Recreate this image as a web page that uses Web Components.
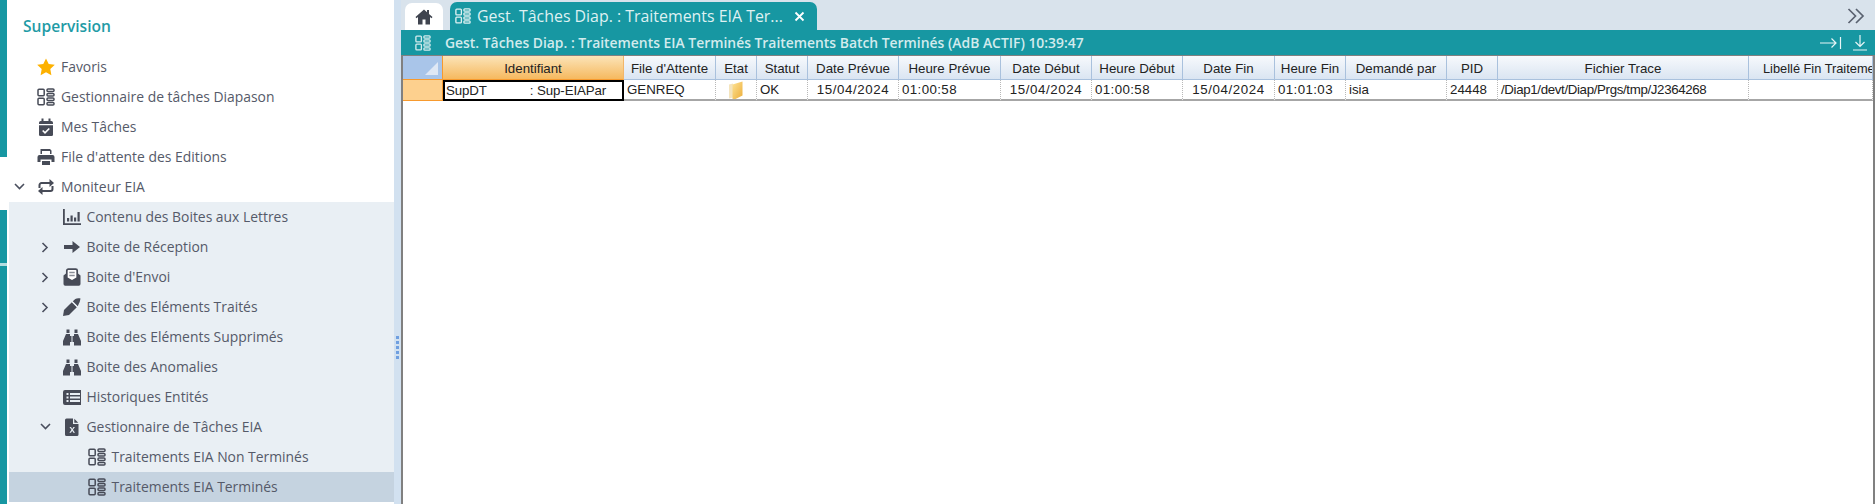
<!DOCTYPE html>
<html lang="fr">
<head>
<meta charset="utf-8">
<title>Supervision</title>
<style>
  html, body { margin: 0; height: 100%; overflow: hidden; background: #fff; }
  body { display: flex; width: 1875px; height: 504px; font-family: "Open Sans", sans-serif; }
</style>
</head>
<body>
<app-strip></app-strip>
<side-nav>
  <tree-row icon="star" level="0">Favoris</tree-row>
  <tree-row icon="board" level="0">Gestionnaire de tâches Diapason</tree-row>
  <tree-row icon="calendar" level="0">Mes Tâches</tree-row>
  <tree-row icon="print" level="0">File d'attente des Editions</tree-row>
  <tree-row icon="retweet" level="0" caret="down">Moniteur EIA</tree-row>
  <tree-group>
    <tree-row icon="chart" level="1">Contenu des Boites aux Lettres</tree-row>
    <tree-row icon="arrow" level="1" caret="right">Boite de Réception</tree-row>
    <tree-row icon="mail" level="1" caret="right">Boite d'Envoi</tree-row>
    <tree-row icon="pen" level="1" caret="right">Boite des Eléments Traités</tree-row>
    <tree-row icon="binoculars" level="1">Boite des Eléments Supprimés</tree-row>
    <tree-row icon="binoculars" level="1">Boite des Anomalies</tree-row>
    <tree-row icon="list" level="1">Historiques Entités</tree-row>
    <tree-row icon="excel" level="1" caret="down">Gestionnaire de Tâches EIA</tree-row>
    <tree-row icon="board" level="2">Traitements EIA Non Terminés</tree-row>
    <tree-row icon="board" level="2" selected>Traitements EIA Terminés</tree-row>
  </tree-group>
</side-nav>
<split-handle></split-handle>
<work-area>
  <tab-bar slot="tabs" label="Gest. Tâches Diap. : Traitements EIA Ter..."></tab-bar>
  <title-bar slot="title">Gest. Tâches Diap. : Traitements EIA Terminés Traitements Batch Terminés (AdB ACTIF) 10:39:47</title-bar>
  <data-grid slot="grid"></data-grid>
</work-area>

<script>
const ICONS = {
  star: '<path fill="#fdb100" d="M9 .4l2.700 5.600 6.100.8-4.500 4.300 1.100 6.100L9 14.300l-5.400 2.900 1.100-6.100L.2 6.800l6.100-.8z"/>',
  board: '<g fill="none" stroke="currentColor" stroke-width="1.500"><rect x="1" y="1.200" width="6.200" height="6.600" rx="1"/><rect x="1" y="10.200" width="6.200" height="6.600" rx="1"/><rect x="10" y="1" width="7" height="2.600" rx="1"/><rect x="10" y="5.400" width="7" height="2.600" rx="1"/><rect x="10" y="10" width="7" height="2.600" rx="1"/><rect x="10" y="14.400" width="7" height="2.600" rx="1"/></g>',
  calendar: '<path fill="currentColor" d="M4.500.5h2V3h5V.5h2V3h.8A1.700 1.700 0 0 1 16 4.700V6H2V4.700A1.700 1.700 0 0 1 3.700 3h.8zM2 7.300h14v9A1.500 1.500 0 0 1 14.500 18h-11A1.500 1.500 0 0 1 2 16.300z"/><path fill="none" stroke="#fff" stroke-width="1.700" d="M5.700 12.500l2.300 2.300 4.300-4.300"/>',
  print: '<path fill="currentColor" d="M3.500 1H13l1.500 1.500V6H13V3H5v3H3.500zM2.500 7h13A2 2 0 0 1 17.500 9v5h-3v-2.500h-11V14h-3V9a2 2 0 0 1 2-2zM5 13h8v4H5z"/>',
  retweet: '<g fill="none" stroke="currentColor" stroke-width="2"><path d="M2.500 10V7a2 2 0 0 1 2-2H14"/><path d="M15.500 8v3a2 2 0 0 1-2 2H4"/></g><path fill="currentColor" d="M12.500 1l4.500 4-4.500 4zM5.500 9L1 13l4.500 4z"/>',
  chart: '<path fill="currentColor" d="M0 1h1.800v14.200H18V17H0z"/><path fill="currentColor" d="M4 10h2.200v3.500H4zM7.500 7.500h2.200v6H7.500zM11 9.500h2.200v4H11zM14.500 4h2.200v9.500h-2.200z"/>',
  arrow: '<path fill="currentColor" d="M1 7h8.500V3l7.500 6-7.500 6v-4H1z"/>',
  mail: '<path fill="currentColor" d="M.5 7.500L3 5.500V9l6 4 6-4V5.500l2.500 2v8.500A1.700 1.700 0 0 1 15.800 17.700H2.200A1.700 1.700 0 0 1 .5 16z"/><path fill="#fff" stroke="currentColor" stroke-width="1.700" d="M3.800 10V2.600A1.500 1.500 0 0 1 5.300 1.100h7.400a1.500 1.500 0 0 1 1.500 1.500V10L9 13z"/><path stroke="#8a8e98" stroke-width="1.400" d="M6.300 4.500h5.400M6.300 7.500h5.400"/>',
  pen: '<path fill="currentColor" d="M0 18l1-6 7.800-7.800 5 5L6 17z"/><path fill="currentColor" d="M9.800 3.200L12.300.9c1.400-.9 3.800-.8 5.200-.5-.4 1.700-.6 3.800-1.700 5.300l-1 2.500z"/><path stroke="#e9eff4" stroke-width="1" fill="none" d="M9 3.500l5.500 5.500"/>',
  binoculars: '<path fill="currentColor" d="M3.500 1.500h3V5h-3zM11.500 1.500h3V5h-3zM3 6h4v2h1.500v6H7v3.500H0V13zM15 6h-4v2H9.500v6H11v3.500h7V13z"/>',
  list: '<path fill="currentColor" fill-rule="evenodd" d="M2 2h16A2 2 0 0 1 20 4v11a2 2 0 0 1-2 2H2a2 2 0 0 1-2-2V4a2 2 0 0 1 2-2zM3.500 5v2h2V5zM3.500 8.500v2h2v-2zM3.500 12v2h2v-2zM7 5v2h10V5zM7 8.500v2h10v-2zM7 12v2h10v-2z"/>',
  excel: '<path fill="currentColor" fill-rule="evenodd" d="M3.500.5h6.500V6h5.500v10.500a1.500 1.500 0 0 1-1.500 1.500H3.500A1.500 1.500 0 0 1 2 16.500V2A1.500 1.500 0 0 1 3.500.5zM11.300.8l4 3.900h-4zM6.500 9l2 2.800-2.100 3H8l1.200-2 1.200 2H12l-2.100-3 2-2.800h-1.500L9.200 10.900 8 9z"/>',
  home: '<path fill="currentColor" d="M9 1.500L.5 9l1 1.200L3 9v7.500h4.500V11.500h3v5H15V9l1.500 1.200 1-1.200L14 5.900V2h-2v2.200z"/>',
  folder: '<defs><linearGradient id="fg" x1="0" x2="1" y1="0" y2="1"><stop offset="0" stop-color="#fde396"/><stop offset="1" stop-color="#edae3a"/></linearGradient></defs><path fill="#f4e4bd" d="M2 3.500l4-1v14l-4 1z"/><path fill="url(#fg)" d="M5.500 3.500l10-3v14l-7 3.500h-3z"/>'
};

function iconSvg(name, size) {
  return `<svg width="${size}" height="${size}" viewBox="0 0 18 18">${ICONS[name] || ''}</svg>`;
}

// teal marks on the far left
class AppStrip extends HTMLElement {
  constructor() {
    super();
    this.attachShadow({ mode: 'open' });
    this.shadowRoot.innerHTML = `
      <style>
        :host { display: flex; flex-direction: column; flex: 0 0 8px; width: 8px; height: 504px; }
        div { background: #1797a2; width: 7px; }
        .a { height: 157px; }
        .gap { height: 53px; background: transparent; }
        .b { height: 53px; }
        .line { height: 3px; background: #b5dde0; }
        .c { flex: 1; }
      </style>
      <div class="a"></div><div class="gap"></div><div class="b"></div><div class="line"></div><div class="c"></div>
    `;
  }
}

class SideNav extends HTMLElement {
  constructor() {
    super();
    this.attachShadow({ mode: 'open' });
    this.shadowRoot.innerHTML = `
      <style>
        :host { display: flex; flex-direction: column; flex: 0 0 386px; width: 386px; height: 504px; overflow: hidden; background: #fff; }
        h1 { margin: 0; height: 52px; padding: 15px 0 0 15px; box-sizing: border-box; font: 600 15.600px/22px "Open Sans", sans-serif; color: #1f9ba6; }
      </style>
      <h1>Supervision</h1>
      <slot></slot>
    `;
  }
}

class TreeGroup extends HTMLElement {
  constructor() {
    super();
    this.attachShadow({ mode: 'open' });
    this.shadowRoot.innerHTML = `
      <style>:host { display: block; margin-left: 1px; background: #e9eff4; }</style>
      <slot></slot>
    `;
  }
}

class TreeRow extends HTMLElement {
  constructor() {
    super();
    this.attachShadow({ mode: 'open' });
  }

  connectedCallback() {
    const level = Number(this.getAttribute('level') || 0);
    const caret = this.getAttribute('caret');
    const pad = level === 0 ? 6 : 5.5 + level * 25;
    let caretSvg = '';
    if (caret === 'down') caretSvg = '<path d="M1 2l4.500 4.500L10 2"/>';
    if (caret === 'right') caretSvg = '<path d="M2.500 1l4.500 4.500L2.500 10"/>';
    this.shadowRoot.innerHTML = `
      <style>
        :host { display: flex; align-items: center; height: 30px; padding-left: ${pad}px; color: #555a69; font: 13.900px/30px "Open Sans", sans-serif; white-space: nowrap; }
        :host([selected]) { background: #c5d3e0; }
        .caret { flex: 0 0 23px; height: 12px; display: flex; align-items: center; }
        .caret svg { fill: none; stroke: #4a4f5e; stroke-width: 1.600; }
        .icon { flex: 0 0 24px; display: flex; align-items: center; color: #474b57; }
        .icon svg { display: block; }
      </style>
      <span class="caret"><svg width="11" height="11" viewBox="0 0 11 11">${caretSvg}</svg></span>
      <span class="icon">${iconSvg(this.getAttribute('icon'), 18)}</span>
      <slot></slot>
    `;
  }
}

class SplitHandle extends HTMLElement {
  constructor() {
    super();
    this.attachShadow({ mode: 'open' });
    this.shadowRoot.innerHTML = `
      <style>
        :host { display: flex; flex-direction: column; align-items: center; justify-content: center; gap: 2px; flex: 0 0 7px; width: 7px; height: 504px; box-sizing: border-box; padding-top: 321px; padding-bottom: 130px; background: #d2e1f0; }
        i { display: block; width: 3px; height: 3px; background: #6f9fe0; }
      </style>
      <i></i><i></i><i></i><i></i><i></i>
    `;
  }
}

class WorkArea extends HTMLElement {
  constructor() {
    super();
    this.attachShadow({ mode: 'open' });
    this.shadowRoot.innerHTML = `
      <style>
        :host { display: flex; flex-direction: column; flex: 1; min-width: 0; height: 504px; background: #d9e3ec; }
        .body { flex: 1; min-height: 0; display: flex; flex-direction: column; border-top: 1px solid #808080; border-left: 2px solid #808080; border-right: 2px solid #808080; background: #fff; }
      </style>
      <slot name="tabs"></slot>
      <slot name="title"></slot>
      <div class="body"><slot name="grid"></slot></div>
    `;
  }
}

class TabBar extends HTMLElement {
  constructor() {
    super();
    this.attachShadow({ mode: 'open' });
  }

  connectedCallback() {
    this.shadowRoot.innerHTML = `
      <style>
        :host { display: flex; align-items: flex-end; height: 30px; padding-left: 4px; color: #3f444f; }
        .home { width: 38px; height: 27px; margin-right: 7px; display: flex; align-items: center; justify-content: center; background: #fff; border-radius: 7px 7px 0 0; }
        .tab { width: 367px; height: 28px; box-sizing: border-box; padding: 0 12px 0 5px; display: flex; align-items: center; gap: 6px; background: #1797a2; border-radius: 7px 7px 0 0; color: #dff1f2; font: 15.900px "Open Sans", sans-serif; white-space: nowrap; }
        .tab span { flex: 1; }
        .tab svg { display: block; }
        .more { margin: 0 10px 6px auto; color: #5a6270; }
        .more svg { display: block; fill: none; stroke: currentColor; stroke-width: 1.700; }
      </style>
      <div class="home">${iconSvg('home', 18)}</div>
      <div class="tab">
        ${iconSvg('board', 16)}
        <span>${this.getAttribute('label')}</span>
        <svg width="11" height="11" viewBox="0 0 11 11" fill="none" stroke="#fff" stroke-width="1.800"><path d="M1.500 1.500l8 8M9.500 1.500l-8 8"/></svg>
      </div>
      <div class="more"><svg width="18" height="16" viewBox="0 0 18 16"><path d="M1.500 1l7 7-7 7M9 1l7 7-7 7"/></svg></div>
    `;
  }
}

class TitleBar extends HTMLElement {
  constructor() {
    super();
    this.attachShadow({ mode: 'open' });
    this.shadowRoot.innerHTML = `
      <style>
        :host { display: flex; align-items: center; height: 25px; padding: 0 3px 0 14px; background: #1797a2; color: #d3ebed; font: 600 13.900px "Open Sans", sans-serif; white-space: nowrap; }
        .ic { flex: 0 0 30px; display: flex; }
        .txt { flex: 1; }
        .tools { display: flex; gap: 11px; align-items: center; margin-right: 5px; }
        svg { display: block; }
      </style>
      <span class="ic">${iconSvg('board', 16)}</span>
      <span class="txt"><slot></slot></span>
      <span class="tools">
        <svg width="22" height="14" viewBox="0 0 22 14" fill="none" stroke="#e8f5f6" stroke-width="1.200"><path d="M0 7h16M11.500 2.500L16 7l-4.500 4.500M20.500 1v12"/></svg>
        <svg width="14" height="16" viewBox="0 0 14 16" fill="none" stroke="#e8f5f6" stroke-width="1.200"><path d="M7 0v11M2.500 7L7 11.500 11.500 7M0 15h14"/></svg>
      </span>
    `;
  }
}

class DataGrid extends HTMLElement {
  constructor() {
    super();
    this.attachShadow({ mode: 'open' });
  }

  connectedCallback() {
    // title, width, cell text, cell class; the corner column comes first
    const cols = [
      ['Identifiant', 181, 'SupDT            : Sup-EIAPar', 'active'],
      ["File d'Attente", 92, 'GENREQ', 'left'],
      ['Etat', 41, '', 'folder'],
      ['Statut', 51, 'OK', 'left'],
      ['Date Prévue', 91, '15/04/2024', 'center date'],
      ['Heure Prévue', 102, '01:00:58', 'left time'],
      ['Date Début', 91, '15/04/2024', 'center date'],
      ['Heure Début', 91, '01:00:58', 'left time'],
      ['Date Fin', 92, '15/04/2024', 'center date'],
      ['Heure Fin', 71, '01:01:03', 'left time'],
      ['Demandé par', 101, 'isia', 'left'],
      ['PID', 51, '24448', 'left'],
      ['Fichier Trace', 251, '/Diap1/devt/Diap/Prgs/tmp/J2364268', 'left path'],
      ['Libellé Fin Traitement', 124, '', 'left']
    ];
    const template = '40px ' + cols.map(c => c[1] + 'px').join(' ');
    const heads = cols.map((c, i) => `<div class="h ${i === 0 ? 'sel' : ''} ${i === 13 ? 'last' : ''}">${c[0]}</div>`).join('');
    const cells = cols.map(c => {
      if (c[3] === 'folder') return `<div class="c center">${iconSvg('folder', 18)}</div>`;
      return `<div class="c ${c[3]}">${c[2]}</div>`;
    }).join('');
    this.shadowRoot.innerHTML = `
      <style>
        :host { display: block; height: 100%; overflow: hidden; background: #fff; color: #222; font: 13.300px "Liberation Sans", Arial, sans-serif; }
        .g { display: grid; grid-template-columns: ${template}; grid-template-rows: 24px 21px; width: max-content; }
        .h { display: flex; align-items: center; justify-content: center; padding-top: 1px; white-space: nowrap; overflow: hidden; box-sizing: border-box; background: linear-gradient(#f7f9fc, #dae5f2); border-right: 1px solid #a9c1dd; border-bottom: 1px solid #a9c1dd; }
        .h.sel { background: linear-gradient(#fbe4b8, #f6b95f); border-right-color: #f2b66a; border-bottom-color: #f79a2e; }
        .h.last { justify-content: flex-start; padding-left: 14px; font-size: 12.800px; }
        .corner { background: #a9c5e9; border-right: 1px solid #f79a2e; border-bottom: 1px solid #f79a2e; box-sizing: border-box; display: flex; align-items: flex-end; justify-content: flex-end; padding: 0 4px 4px 0; }
        .corner svg { display: block; }
        .marker { background: #fdd08e; border-bottom: 1px solid #f79a2e; border-right: 1px solid #f79a2e; box-sizing: border-box; }
        .c { display: flex; align-items: center; box-sizing: border-box; white-space: pre; overflow: hidden; padding-left: 3px; border-right: 1px dotted #b8b8b8; border-bottom: 2px solid #a6a6a6; }
        .c.center { justify-content: center; padding-left: 0; }
        .c.active { border: 2px solid #000; padding-left: 1px; letter-spacing: -0.100px; }
        .c.date { letter-spacing: 0.600px; }
        .c.time { letter-spacing: 0.400px; }
        .c.path { letter-spacing: -0.350px; }
      </style>
      <div class="g">
        <div class="corner"><svg width="13" height="13" viewBox="0 0 13 13"><path fill="#dfe8f5" d="M13 0v13H0z"/></svg></div>
        ${heads}
        <div class="marker"></div>
        ${cells}
      </div>
    `;
  }
}

customElements.define('app-strip', AppStrip);
customElements.define('side-nav', SideNav);
customElements.define('tree-group', TreeGroup);
customElements.define('tree-row', TreeRow);
customElements.define('split-handle', SplitHandle);
customElements.define('work-area', WorkArea);
customElements.define('tab-bar', TabBar);
customElements.define('title-bar', TitleBar);
customElements.define('data-grid', DataGrid);
</script>
</body>
</html>
